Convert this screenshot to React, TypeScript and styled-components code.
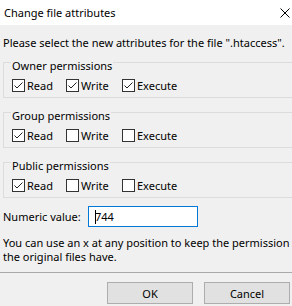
import React from "react";
import styled, { createGlobalStyle } from "styled-components";

const GlobalStyle = createGlobalStyle`
  html, body { margin: 0; padding: 0; overflow: hidden; background: #f0f0f0; }
  body { font-family: "Noto Sans", "Open Sans", sans-serif; font-size: 11px; color: #000; }
`;

const Window = styled.div`
  width: 292px;
  height: 306px;
  overflow: hidden;
  background: #f0f0f0;
  display: flex;
  flex-direction: column;
`;

const TitleBar = styled.div`
  height: 25px;
  background: #ffffff;
  display: flex;
  align-items: center;
  justify-content: space-between;
  padding: 0 2px 0 4px;
  flex: none;
`;

const Title = styled.span`
  font-size: 11px;
  line-height: 15px;
`;

const Body = styled.div`
  padding: 10px 0 0 3px;
  display: flex;
  flex-direction: column;
`;

const Line = styled.div<{ $mt?: number }>`
  line-height: 15px;
  height: 15px;
  white-space: nowrap;
  overflow: hidden;
  margin-top: ${(p) => p.$mt ?? 0}px;
`;

const Group = styled.fieldset<{ $mt: number }>`
  margin: ${(p) => p.$mt}px -20px 0 0;
  padding: 0 8px 4px 8px;
  border: 1px solid #dcdcdc;
  min-width: 0;
`;

const Legend = styled.legend`
  padding: 6px 1px 0 1px;
  margin-left: -1px;
  line-height: 15px;
`;

const Row = styled.div`
  display: flex;
  align-items: center;
  height: 15px;
  margin-top: 5px;
`;

const Check = styled.label<{ $w: number }>`
  display: flex;
  align-items: center;
  width: ${(p) => p.$w}px;
  white-space: nowrap;
`;

const Box = styled.span`
  width: 13px;
  height: 13px;
  box-sizing: border-box;
  border: 1px solid #333333;
  background: #ffffff;
  margin-right: 2px;
  display: flex;
  align-items: center;
  justify-content: center;
  flex: none;
`;

const NumericRow = styled.div`
  display: flex;
  align-items: center;
  height: 21px;
  margin-top: 8px;
`;

const NumLabel = styled.span`
  width: 85px;
  line-height: 15px;
`;

const Input = styled.div`
  width: 110px;
  height: 21px;
  box-sizing: border-box;
  border: 1px solid #0078d7;
  background: #fff;
  display: flex;
  align-items: center;
  padding-left: 6px;
  line-height: 15px;
`;

const Caret = styled.span`
  width: 1px;
  height: 14px;
  background: #000;
  margin-right: -1px;
`;

const Separator = styled.div`
  height: 1px;
  background: #a9a9a9;
  margin-top: 8px;
  flex: none;
`;

const Footer = styled.div`
  display: flex;
  justify-content: flex-end;
  gap: 11px;
  padding: 9px 2px 0 0;
`;

const Button = styled.div`
  width: 86px;
  height: 22px;
  box-sizing: border-box;
  border: 1px solid #adadad;
  background: #e1e1e1;
  display: flex;
  align-items: center;
  justify-content: center;
  line-height: 15px;
`;

const CheckMark = () => (
  <svg width="11" height="11" viewBox="0 0 11 11">
    <path d="M1.5 5.5 L4 8 L9.5 2.5" fill="none" stroke="#222" strokeWidth="1" />
  </svg>
);

const CloseIcon = () => (
  <svg width="10" height="10" viewBox="0 0 10 10">
    <path d="M0.5 0.5 L9.5 9.5 M9.5 0.5 L0.5 9.5" stroke="#000" strokeWidth="1" />
  </svg>
);

type Perm = { title: string; values: [boolean, boolean, boolean]; mt: number };

const perms: Perm[] = [
  { title: "Owner permissions", values: [true, true, true], mt: 2 },
  { title: "Group permissions", values: [true, false, false], mt: 4 },
  { title: "Public permissions", values: [true, false, false], mt: 4 },
];

const labels: [string, number][] = [
  ["Read", 54],
  ["Write", 56],
  ["Execute", 80],
];

export default function App() {
  return (
    <>
      <GlobalStyle />
      <Window>
        <TitleBar>
          <Title>Change file attributes</Title>
          <CloseIcon />
        </TitleBar>
        <Body>
          <Line>Please select the new attributes for the file ".htaccess".</Line>
          {perms.map((p) => (
            <Group key={p.title} $mt={p.mt}>
              <Legend>{p.title}</Legend>
              <Row>
                {labels.map(([l, w], i) => (
                  <Check key={l} $w={w}>
                    <Box>{p.values[i] && <CheckMark />}</Box>
                    {l}
                  </Check>
                ))}
              </Row>
            </Group>
          ))}
          <NumericRow>
            <NumLabel>Numeric value:</NumLabel>
            <Input>
              <Caret />
              744
            </Input>
          </NumericRow>
          <Line $mt={8}>You can use an x at any position to keep the permission</Line>
          <Line $mt={-1}>the original files have.</Line>
        </Body>
        <Separator />
        <Footer>
          <Button>OK</Button>
          <Button>Cancel</Button>
        </Footer>
      </Window>
    </>
  );
}
